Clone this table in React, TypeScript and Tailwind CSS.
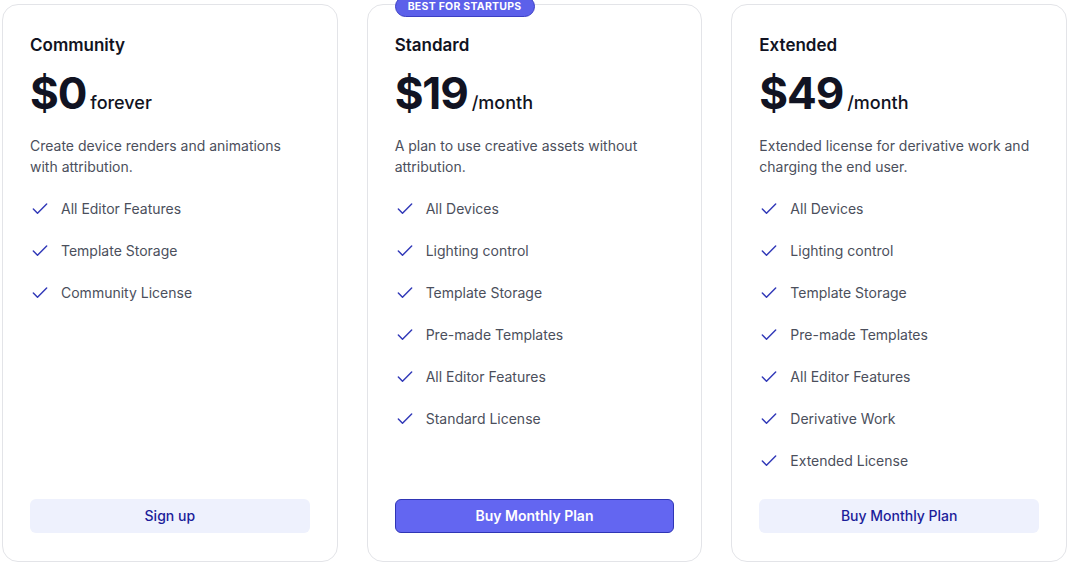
import { Check } from "lucide-react";

type Plan = {
  name: string;
  price: string;
  period: string;
  description: string;
  features: string[];
  cta: string;
  featured?: boolean;
};

const plans: Plan[] = [
  {
    name: "Community",
    price: "$0",
    period: "forever",
    description: "Create device renders and animations with attribution.",
    features: ["All Editor Features", "Template Storage", "Community License"],
    cta: "Sign up",
  },
  {
    name: "Standard",
    price: "$19",
    period: "/month",
    description: "A plan to use creative assets without attribution.",
    features: [
      "All Devices",
      "Lighting control",
      "Template Storage",
      "Pre-made Templates",
      "All Editor Features",
      "Standard License",
    ],
    cta: "Buy Monthly Plan",
    featured: true,
  },
  {
    name: "Extended",
    price: "$49",
    period: "/month",
    description: "Extended license for derivative work and charging the end user.",
    features: [
      "All Devices",
      "Lighting control",
      "Template Storage",
      "Pre-made Templates",
      "All Editor Features",
      "Derivative Work",
      "Extended License",
    ],
    cta: "Buy Monthly Plan",
  },
];

function PlanCard({ plan }: { plan: Plan }) {
  return (
    <div className="relative flex h-[558px] flex-col rounded-2xl border border-[#e3e4e8] bg-white px-[27px] pt-7 pb-7">
      {plan.featured && (
        <span className="absolute -top-[9px] left-[27px] rounded-full border border-[#3c3fc4] bg-[#5c60ea] px-3 text-[10.5px] leading-[19px] font-bold tracking-wide text-white uppercase">
          Best for startups
        </span>
      )}
      <h3 className="text-[17px] leading-6 font-semibold text-[#111322]">{plan.name}</h3>
      <div className="mt-[14px] flex items-baseline gap-1">
        <span className="text-[44px] leading-none font-bold tracking-tight text-[#111322]">
          {plan.price}
        </span>
        <span className="text-lg font-medium text-[#111322]">{plan.period}</span>
      </div>
      <p className="mt-[18px] text-sm leading-[21px] text-[#4b4f5c]">{plan.description}</p>
      <ul className="mt-[21px] flex flex-col gap-[21px]">
        {plan.features.map((f) => (
          <li key={f} className="flex items-center gap-[11px] text-sm leading-[21px] text-[#4b4f5c]">
            <Check className="h-5 w-5 text-[#3139b8]" strokeWidth={1.75} />
            {f}
          </li>
        ))}
      </ul>
      <button
        className={
          plan.featured
            ? "mt-auto h-[34px] w-full rounded-md border border-[#2f35b5] bg-[#6366f1] text-sm font-semibold text-white"
            : "mt-auto h-[34px] w-full rounded-md bg-[#eef1fd] text-sm font-medium text-[#1c1d9a]"
        }
      >
        {plan.cta}
      </button>
    </div>
  );
}

export default function App() {
  return (
    <div className="min-h-screen bg-white pt-1 pl-[2px]" style={{ fontFamily: "Inter, 'Noto Sans', sans-serif" }}>
      <div className="grid w-[1065px] grid-cols-3 gap-[29px]">
        {plans.map((p) => (
          <PlanCard key={p.name} plan={p} />
        ))}
      </div>
    </div>
  );
}
